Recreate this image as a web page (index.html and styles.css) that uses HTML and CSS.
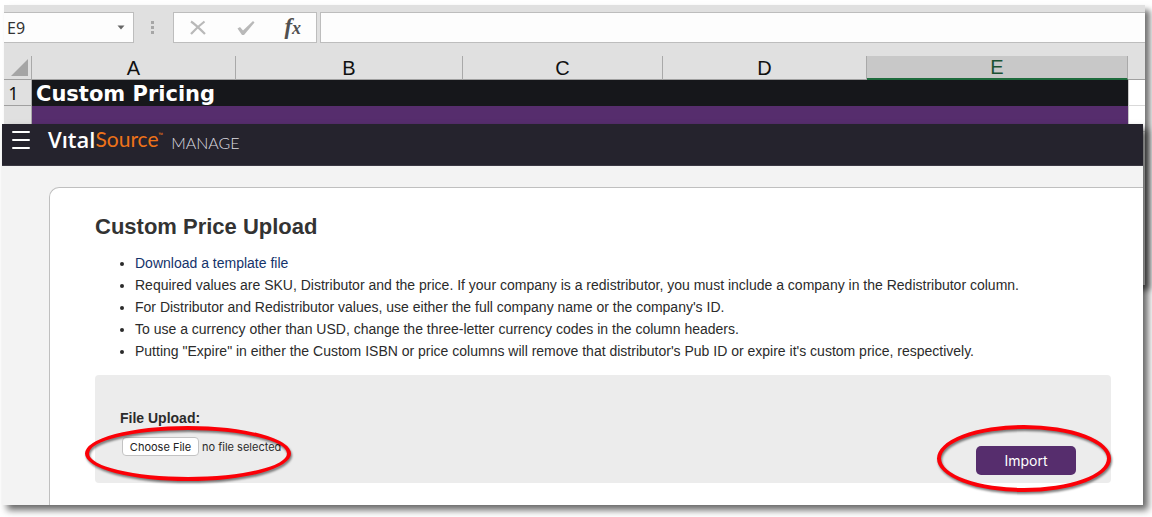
FILE: index.html
```html
<!DOCTYPE html>
<html lang="en">
<head>
<meta charset="utf-8">
<meta name="viewport" content="width=device-width, initial-scale=1">
<title>Custom Price Upload</title>
<link rel="stylesheet" href="styles.css">
</head>
<body>
<div class="stack">
  <section class="sheet" aria-label="Spreadsheet">
    <div class="formula-bar">
      <button class="name-box" type="button" aria-label="Name box">
        <span>E9</span>
        <svg width="8" height="5" viewBox="0 0 8 5" aria-hidden="true"><path d="M0.5 0.5h7L4 4.5z" fill="#666"/></svg>
      </button>
      <svg class="grip" width="4" height="16" viewBox="0 0 4 16" aria-hidden="true"><path d="M0 1h3v3H0zM0 6h3v3H0zM0 11h3v3H0z" fill="#a6a6a6"/></svg>
      <div class="formula-tools">
        <button type="button" aria-label="Cancel"><svg width="18" height="16" viewBox="0 0 18 16"><path d="M2 1.500C6 4 11 9 16 14M15.500 1.500C11 5 6 9.500 2 14" fill="none" stroke="#b9b9b9" stroke-width="2.200"/></svg></button>
        <button type="button" aria-label="Enter"><svg width="18" height="16" viewBox="0 0 18 16"><path d="M0.500 8.500l2.500-1.500 3 3.500L16 1l1.500 1.500L7 15H5z" fill="#b9b9b9"/></svg></button>
        <button class="fx" type="button" aria-label="Insert function"><i>f</i><i class="fx-x">x</i></button>
      </div>
      <input class="formula-input" type="text" aria-label="Formula">
    </div>
    <table class="grid">
      <colgroup><col class="col-index"><col class="col-a"><col class="col-b"><col class="col-c"><col class="col-d"><col class="col-e"><col class="col-rest"></colgroup>
      <thead>
        <tr>
          <th class="corner"><svg width="18" height="18" viewBox="0 0 18 18" aria-hidden="true"><path d="M17 0v17H0z" fill="#a5a5a5"/></svg></th>
          <th scope="col">A</th><th scope="col">B</th><th scope="col">C</th><th scope="col">D</th><th scope="col" class="selected">E</th><th class="rest"></th>
        </tr>
      </thead>
      <tbody>
        <tr class="title-row"><th scope="row">1</th><td colspan="5">Custom Pricing</td><td class="blank"></td></tr>
        <tr class="band-row"><th></th><td colspan="5"></td><td class="blank"></td></tr>
      </tbody>
    </table>
  </section>

  <main class="app">
    <header class="topbar">
      <button class="menu" type="button" aria-label="Menu"><svg width="18" height="18" viewBox="0 0 18 18"><path d="M1 1h16M1 9h16M1 17h16" stroke="#fff" stroke-width="2" stroke-linecap="round"/></svg></button>
      <a class="brand" href="#"><span class="vital">Vıtal</span><span class="source">Source</span><span class="tm">™</span></a>
      <span class="product">MANAGE</span>
    </header>
    <div class="workspace">
      <section class="card">
        <h1>Custom Price Upload</h1>
        <ul>
          <li><a href="#">Download a template file</a></li>
          <li>Required values are SKU, Distributor and the price. If your company is a redistributor, you must include a company in the Redistributor column.</li>
          <li>For Distributor and Redistributor values, use either the full company name or the company's ID.</li>
          <li>To use a currency other than USD, change the three-letter currency codes in the column headers.</li>
          <li>Putting "Expire" in either the Custom ISBN or price columns will remove that distributor's Pub ID or expire it's custom price, respectively.</li>
        </ul>
        <form class="upload">
          <div class="file-field">
            <label for="price-file">File Upload:</label>
            <div class="file-row"><input id="price-file" type="file"><span>no file selected</span></div>
          </div>
          <button class="import" type="button">Import</button>
          <span class="ring ring-file"></span>
          <span class="ring ring-import"></span>
        </form>
      </section>
    </div>
  </main>
</div>
</body>
</html>
```

FILE: styles.css
```css
* { box-sizing: border-box; }

body {
  margin: 0;
  background: #fff;
  color: #2b2b2b;
  font-family: "Liberation Sans", Arial, sans-serif;
  font-size: 14px;
}

button { font: inherit; cursor: pointer; }

/* The app window overlaps the lower part of the spreadsheet window. */
.stack {
  display: grid;
  grid-template-columns: minmax(0, 1fr);
  grid-template-rows: 119px 161px auto;
  padding: 5px 7px 12px 2px;
}

.sheet {
  grid-area: 1 / 1 / 3 / 2;
  margin-left: 2px;
  background: #fff;
  box-shadow: 5px 5px 6px rgba(0, 0, 0, 0.55);
}

.app {
  grid-area: 2 / 1 / 4 / 2;
  margin-right: 2px;
  background: #f3f3f3;
  box-shadow: 5px 5px 7px rgba(0, 0, 0, 0.6);
}

/* Spreadsheet */
.formula-bar {
  display: flex;
  align-items: center;
  height: 51px;
  padding: 7px 0 13px;
  background: #e0e0e0;
}

.name-box {
  display: flex;
  align-items: center;
  justify-content: space-between;
  width: 130px;
  height: 31px;
  padding: 0 8px 0 3px;
  border: 1px solid #bdbdbd;
  border-left: 0;
  background: #fdfdfd;
  color: #333;
  font-family: "Noto Sans", sans-serif;
  font-size: 16px;
}

.grip { margin: 0 18px 0 17px; }

.formula-tools {
  display: flex;
  align-items: center;
  justify-content: space-around;
  width: 144px;
  height: 31px;
  margin-right: 3px;
  border: 1px solid #bdbdbd;
  background: #fdfdfd;
}

.formula-tools button {
  display: flex;
  padding: 0;
  border: 0;
  background: none;
}

.formula-tools .fx {
  align-items: baseline;
  color: #505050;
  font-family: "Liberation Serif", serif;
  font-size: 23px;
  font-weight: bold;
  line-height: 24px;
}

.fx .fx-x { font-size: 18px; }

.formula-input {
  flex: 1;
  min-width: 0;
  height: 31px;
  border: 1px solid #bdbdbd;
  border-right: 0;
  background: #fdfdfd;
}

.grid {
  width: 100%;
  table-layout: fixed;
  border-collapse: separate;
  border-spacing: 0;
}

.col-index { width: 28px; }
.col-a { width: 204px; }
.col-b { width: 227px; }
.col-c { width: 200px; }
.col-d { width: 204px; }
.col-rest { width: 17px; }

.grid th, .grid td { padding: 0; }

.grid th {
  border-right: 1px solid #a9a9a9;
  border-bottom: 1px solid #a0a0a0;
  background: #e0e0e0;
  color: #111;
  font-size: 20px;
  font-weight: normal;
}

.grid thead th { height: 24px; line-height: 22px; }

.grid .selected {
  border-bottom: 2px solid #1e6b3c;
  background: #c8c8c8;
  color: #1b5233;
}

.grid .rest { border-right: 0; }

.grid .corner { text-align: right; line-height: 0; vertical-align: bottom; padding: 0 2px 2px 0; }

.grid tbody th { height: 26px; font-family: "Noto Sans", sans-serif; font-size: 18px; line-height: 23px; padding: 2px 8px 0 0; }

.title-row td {
  background: #16171b;
  color: #fff;
  font-family: "DejaVu Sans", Verdana, sans-serif;
  font-size: 21px;
  font-weight: bold;
  line-height: 24px;
}

.title-row td:not(.blank) { padding: 2px 0 0 4px; }
.band-row td { background: #562d6d; }

.grid .blank {
  border-bottom: 1px solid #d9d9d9;
  border-left: 1px solid #c9c9c9;
  background: #fff;
}

/* App header */
.topbar {
  display: flex;
  align-items: flex-start;
  height: 42px;
  padding: 0 10px;
  border-bottom: 1px solid #3a3842;
  background: #25232d;
}

.menu {
  display: flex;
  margin-top: 7px;
  padding: 0;
  border: 0;
  background: none;
}

.brand {
  display: flex;
  margin-left: 18px;
  color: #fff;
  font-family: "Open Sans", "Noto Sans", sans-serif;
  font-size: 22px;
  line-height: 30px;
  text-decoration: none;
}

.vital { font-weight: 600; }
.source { color: #ee7219; font-family: Lato, sans-serif; font-size: 21px; font-weight: 400; }
.tm { color: #ee7219; font-size: 6px; line-height: 22px; }

.product {
  margin-left: 8px;
  color: #dedde1;
  font-family: Lato, sans-serif;
  font-size: 16px;
  font-weight: 300;
  line-height: 37px;
}

/* App content */
.workspace { padding: 21px 0 0 47px; }

.card {
  padding: 24px 32px 22px 45px;
  border: 1px solid #bfbfbf;
  border-right: 0;
  border-bottom: 0;
  border-radius: 10px 0 0 0;
  background: #fff;
}

h1 {
  margin: 0;
  color: #333;
  font-size: 22px;
  line-height: 30px;
}

ul {
  margin: 10px 0 13px;
  padding-left: 40px;
  line-height: 22px;
}

ul a { color: #14336b; text-decoration: none; }

.upload {
  position: relative;
  display: flex;
  align-items: flex-start;
  justify-content: space-between;
  height: 108px;
  padding: 34px 35px 0 25px;
  border-radius: 4px;
  background: #ececec;
}

.file-field label {
  display: block;
  font-weight: bold;
  line-height: 18px;
}

.file-row {
  display: flex;
  align-items: center;
  gap: 3px;
  margin: 10px 0 0 2px;
  font-family: Inter, sans-serif;
  font-size: 11px;
}

/* Only the picker button shows; the status text stands beside it. */
.file-row input {
  width: 77px;
  height: 19px;
  overflow: hidden;
  color: transparent;
  font: inherit;
}

.file-row input::file-selector-button {
  width: 77px;
  height: 19px;
  margin: 0;
  padding: 0;
  border: 1px solid #c3c3c3;
  border-radius: 4px;
  background: #fff;
  color: #222;
  font: inherit;
}

.import {
  width: 100px;
  height: 29px;
  margin-top: 37px;
  padding: 0;
  border: 0;
  border-radius: 5px;
  background: #562d6d;
  color: #fff;
  font-family: Inter, sans-serif;
  font-size: 14px;
}

/* Hand-drawn style callouts over the controls */
.ring {
  position: absolute;
  border: 4px solid #fb0007;
  border-radius: 50%;
  filter: drop-shadow(1px 2px 1px rgba(0, 0, 0, 0.5));
  pointer-events: none;
}

.ring-file { top: 51px; left: -10px; width: 206px; height: 55px; }
.ring-import { top: 50px; right: 0; width: 174px; height: 67px; }
```
